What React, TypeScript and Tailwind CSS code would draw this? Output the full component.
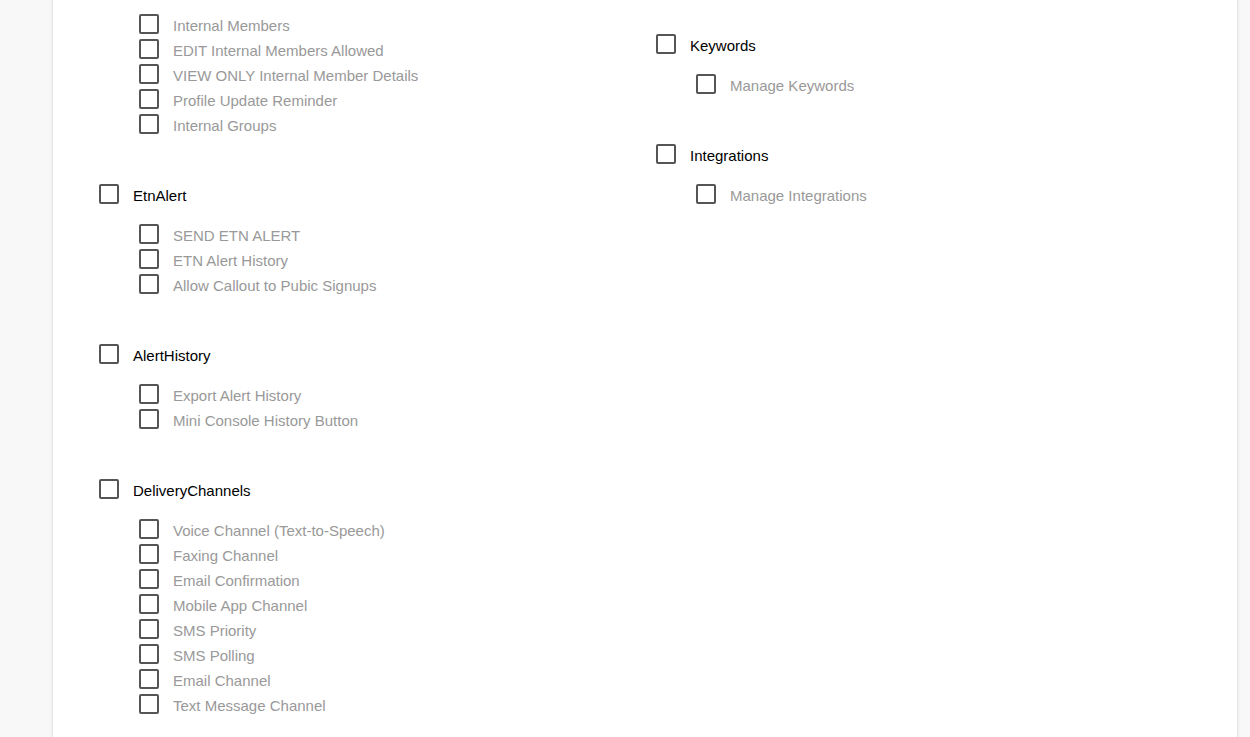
const leftGroups: { title?: string; items: string[] }[] = [
  {
    items: [
      "Internal Members",
      "EDIT Internal Members Allowed",
      "VIEW ONLY Internal Member Details",
      "Profile Update Reminder",
      "Internal Groups",
    ],
  },
  {
    title: "EtnAlert",
    items: ["SEND ETN ALERT", "ETN Alert History", "Allow Callout to Pubic Signups"],
  },
  {
    title: "AlertHistory",
    items: ["Export Alert History", "Mini Console History Button"],
  },
  {
    title: "DeliveryChannels",
    items: [
      "Voice Channel (Text-to-Speech)",
      "Faxing Channel",
      "Email Confirmation",
      "Mobile App Channel",
      "SMS Priority",
      "SMS Polling",
      "Email Channel",
      "Text Message Channel",
    ],
  },
];

const rightGroups: { title?: string; items: string[] }[] = [
  { title: "Keywords", items: ["Manage Keywords"] },
  { title: "Integrations", items: ["Manage Integrations"] },
];

const Box = () => (
  <span className="block w-5 h-5 shrink-0 border-2 border-[#555555] rounded-[2px] bg-white -mt-[4px]" />
);

const Group = ({ title, items }: { title?: string; items: string[] }) => (
  <div className="flex flex-col">
    {title && (
      <label className="flex items-center h-[30px] gap-[14px] text-[15px] text-black cursor-pointer">
        <Box />
        <span className="leading-[30px]">{title}</span>
      </label>
    )}
    <div className={`flex flex-col pl-10 ${title ? "mt-[12px]" : ""}`}>
      {items.map((it) => (
        <label key={it} className="flex items-center h-[25px] gap-[14px] text-[15px] text-[#999999] cursor-pointer">
          <Box />
          <span className="leading-[25px]">{it}</span>
        </label>
      ))}
    </div>
  </div>
);

export default function App() {
  return (
    <div className="min-h-[737px] h-[737px] overflow-hidden bg-[#f8f8f8] font-['Liberation_Sans',Arial,sans-serif]">
      <div className="ml-[52px] w-[1186px] h-full bg-white border-x border-[#e4e4e4] shadow-[0_0_3px_rgba(0,0,0,0.08)]">
        <div className="grid grid-cols-[557px_1fr] pl-[46px]">
          <div className="flex flex-col gap-[43px] pt-[13px]">
            {leftGroups.map((g, i) => (
              <Group key={i} {...g} />
            ))}
          </div>
          <div className="flex flex-col gap-[43px] pt-[31px]">
            {rightGroups.map((g, i) => (
              <Group key={i} {...g} />
            ))}
          </div>
        </div>
      </div>
    </div>
  );
}
